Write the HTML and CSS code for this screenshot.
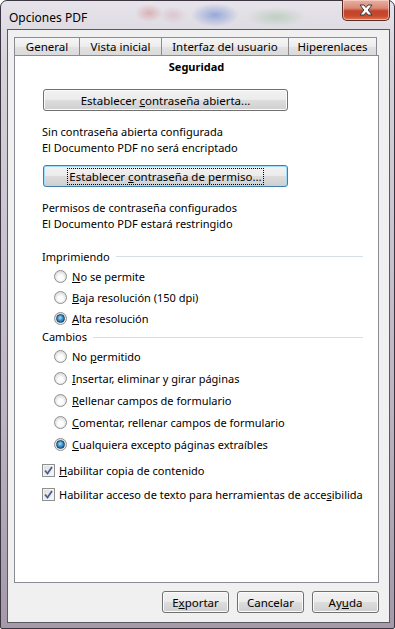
FILE: index.html
```html
<!DOCTYPE html>
<html lang="es">
<head>
    <meta charset="UTF-8">
    <title>Opciones PDF</title>
    <link rel="stylesheet" href="styles.css">
</head>
<body>

    <div class="window">
        <div class="titlebar">
            <span class="title">Opciones PDF</span>
            <div class="close">
                <svg width="16" height="12" viewBox="0 0 16 12">
                    <path d="M2 1 H6 L8 3.5 L10 1 H14 L10.2 6 L14 11 H10 L8 8.5 L6 11 H2 L5.8 6 Z" fill="#fff" stroke="#3a3a3a" stroke-width="1" stroke-linejoin="round"/>
                </svg>
            </div>
        </div>

        <div class="client">
            <div class="tabrow">
                <div class="tab t1">General</div>
                <div class="tab t2">Vista inicial</div>
                <div class="tab t3">Interfaz del usuario</div>
                <div class="tab t4">Hiperenlaces</div>
            </div>

            <div class="page">
                <div class="page-title">Seguridad</div>

                <button class="btn wide first"><span>Establecer <u>c</u>ontraseña abierta...</span></button>
                <p class="note">Sin contraseña abierta configurada<br>El Documento PDF no será encriptado</p>

                <button class="btn wide focused"><span class="focus-rect">Establecer <u>c</u>ontraseña de permiso...</span></button>
                <p class="note">Permisos de contraseña configurados<br>El Documento PDF estará restringido</p>

                <div class="legend print"><span>Imprimiendo</span><i></i></div>
                <div class="opt r21"><span class="radio"></span><span><u>N</u>o se permite</span></div>
                <div class="opt r21"><span class="radio"></span><span><u>B</u>aja resolución (150 dpi)</span></div>
                <div class="opt r20"><span class="radio on"></span><span><u>A</u>lta resolución</span></div>

                <div class="legend changes"><span>Cambios</span><i></i></div>
                <div class="opt r22"><span class="radio"></span><span>No <u>p</u>ermitido</span></div>
                <div class="opt r22"><span class="radio"></span><span><u>I</u>nsertar, eliminar y girar páginas</span></div>
                <div class="opt r22"><span class="radio"></span><span><u>R</u>ellenar campos de formulario</span></div>
                <div class="opt r22"><span class="radio"></span><span><u>C</u>omentar, rellenar campos de formulario</span></div>
                <div class="opt r22"><span class="radio on"></span><span><u>C</u>ualquiera excepto páginas extraíbles</span></div>

                <div class="opt check-row first-check"><span class="check"><svg width="9" height="9" viewBox="0 0 9 9"><path d="M1 4.5 L3.5 7.5 L8 1" fill="none" stroke="#4b5e95" stroke-width="1.8"/></svg></span><span><u>H</u>abilitar copia de contenido</span></div>
                <div class="opt check-row"><span class="check"><svg width="9" height="9" viewBox="0 0 9 9"><path d="M1 4.5 L3.5 7.5 L8 1" fill="none" stroke="#4b5e95" stroke-width="1.8"/></svg></span><span>Habilitar acceso de texto para herramientas de acce<u>s</u>ibilida</span></div>
            </div>

            <div class="actions">
                <button class="btn small"><span>E<u>x</u>portar</span></button>
                <button class="btn small"><span>Cancelar</span></button>
                <button class="btn small"><span>Ay<u>u</u>da</span></button>
            </div>
        </div>
    </div>

</body>
</html>
```

FILE: styles.css
```css
/* General Styles */
* {
    box-sizing: border-box;
}

body {
    margin: 0;
    width: 395px;
    height: 629px;
    overflow: hidden;
    font-family: 'Noto Sans', 'Open Sans', sans-serif;
    font-size: 11px;
    color: #000;
    background: #fff;
}

u {
    text-decoration: underline;
    text-underline-offset: 1px;
}

/* Window frame */
.window {
    width: 395px;
    height: 629px;
    border: 1px solid #3a3540;
    border-radius: 7px 7px 2px 2px;
    padding: 0 4px 5px 6px;
    display: flex;
    flex-direction: column;
    background:
        radial-gradient(ellipse 24px 12px at 214px 14px, rgba(60, 100, 200, 0.45), transparent),
        radial-gradient(ellipse 14px 9px at 148px 12px, rgba(200, 90, 90, 0.35), transparent),
        radial-gradient(ellipse 14px 9px at 172px 14px, rgba(200, 120, 140, 0.25), transparent),
        radial-gradient(ellipse 30px 10px at 275px 16px, rgba(110, 170, 110, 0.3), transparent),
        linear-gradient(#e6e4ea, #d6d3da 60px, #bdb5c1 400px, #a599aa);
}

.titlebar {
    height: 28px;
    display: flex;
    align-items: flex-start;
}

.title {
    margin: 8px 0 0 2px;
    font-size: 12px;
    color: #000;
}

.close {
    margin: -1px 0 0 auto;
    width: 48px;
    height: 21px;
    border: 1px solid #5b2a22;
    border-top: none;
    border-radius: 0 0 5px 5px;
    background: linear-gradient(#e9b0a3, #d88a78 40%, #c3432b 55%, #c84a2e 80%, #e07a55);
    box-shadow: inset 0 0 0 1px rgba(255, 220, 210, 0.6);
    display: flex;
    align-items: center;
    justify-content: center;
}

/* Client area */
.client {
    flex: 1;
    border: 1px solid #5d5762;
    background: #f0f0f0;
    padding: 7px 0 0 6px;
}

.tabrow {
    display: flex;
    height: 18px;
}

.tab {
    height: 18px;
    border: 1px solid #898c95;
    border-right: none;
    border-bottom: none;
    background: linear-gradient(#f6f6f6, #ececec 50%, #e2e2e2 51%, #dadada);
    text-align: center;
    line-height: 17px;
    font-size: 11.5px;
}

.t1 { width: 65px; }
.t2 { width: 82px; }
.t3 { width: 127px; }
.t4 { width: 89px; border-right: 1px solid #898c95; }

.page {
    width: 365px;
    height: 528px;
    background: #fff;
    border: 1px solid #898c95;
    padding: 0 0 0 27px;
    overflow: hidden;
}

.page-title {
    height: 22px;
    line-height: 22px;
    text-align: center;
    font-weight: bold;
    margin-left: -27px;
}

/* Buttons */
.btn {
    font-family: inherit;
    font-size: 11.5px;
    color: #000;
    padding: 0;
    border: 1px solid #707070;
    border-radius: 3px;
    background: linear-gradient(#f2f2f2, #ebebeb 50%, #dddddd 51%, #cfcfcf);
    box-shadow: inset 0 0 0 1px #fbfbfb;
    display: flex;
    align-items: center;
    justify-content: center;
}

.wide {
    width: 245px;
    height: 22px;
    margin-left: 1px;
}

.first {
    margin-top: 11px;
}

.focused {
    margin-top: 9px;
    border-color: #3c7fb1;
    box-shadow: inset 0 0 0 1px #9fdcf8;
}

.focus-rect {
    outline: 1px dotted #000;
    outline-offset: 0;
    padding: 0 1px;
    line-height: 15px;
}

.note {
    margin: 13px 0 0;
    line-height: 16px;
}

/* Groups */
.legend {
    display: flex;
    align-items: center;
    height: 20px;
}

.legend i {
    flex: 1;
    height: 1px;
    background: #d5dfe5;
    margin: 1px 15px 0 6px;
}

.print {
    margin-top: 14px;
}

.changes {
    height: 17px;
}

.opt {
    display: flex;
    align-items: center;
    white-space: nowrap;
}

.r20 {
    height: 20px;
    padding-left: 12px;
}

.r21 {
    height: 21px;
    padding-left: 12px;
}

.r22 {
    height: 22px;
    padding-left: 12px;
}

.check-row {
    height: 24px;
}

.first-check {
    margin-top: 3px;
}

.radio {
    width: 13px;
    height: 13px;
    border-radius: 50%;
    border: 1px solid #8e8f8f;
    background: radial-gradient(circle at 50% 60%, #fdfdfd 30%, #e8e8e8 55%, #cfcfcf 100%);
    margin-right: 5px;
    display: flex;
    align-items: center;
    justify-content: center;
    flex: none;
}

.radio.on::after {
    content: "";
    width: 7px;
    height: 7px;
    border-radius: 50%;
    border: 1px solid #1d3e63;
    background: radial-gradient(circle at 45% 40%, #a6e2fb 0%, #3b8fcb 45%, #164c84 100%);
}

.check {
    width: 13px;
    height: 13px;
    border: 1px solid #8e8f8f;
    background: linear-gradient(135deg, #dcdcdc, #f8f8f8);
    box-shadow: inset 0 0 0 1px #f4f4f4;
    margin-right: 4px;
    display: flex;
    align-items: center;
    justify-content: center;
    flex: none;
}

/* Bottom buttons */
.actions {
    width: 365px;
    display: flex;
    justify-content: flex-end;
    gap: 8px;
    margin-top: 8px;
}

.small {
    width: 67px;
    height: 22px;
}
```
